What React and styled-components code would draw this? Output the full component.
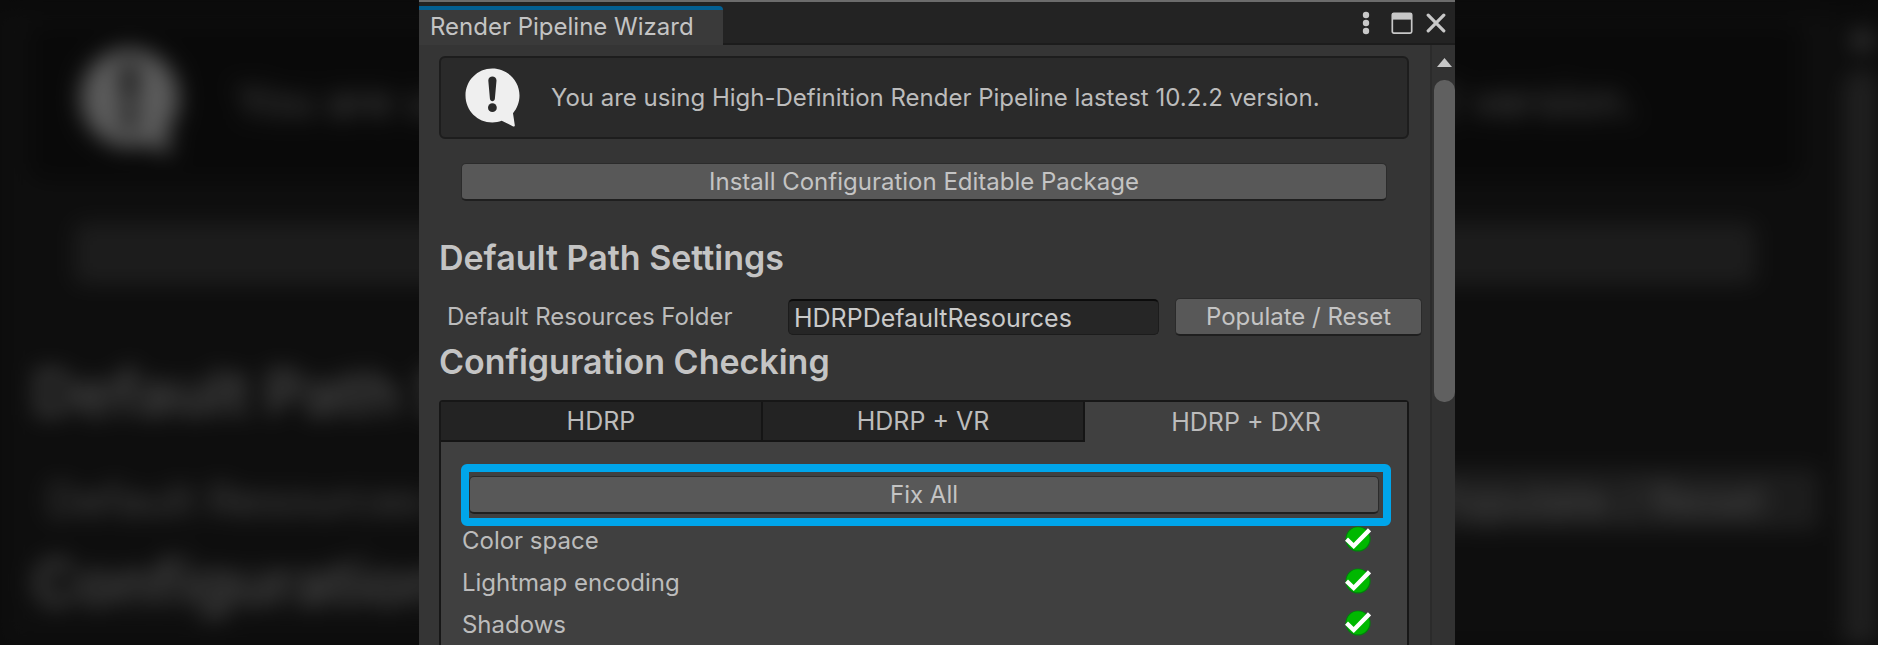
import React, { useId } from "react";
import styled, { createGlobalStyle } from "styled-components";

const GlobalStyle = createGlobalStyle`
  * { box-sizing: border-box; }
  body {
    margin: 0;
    background: #0b0b0b;
    font-family: Inter, "Liberation Sans", sans-serif;
    overflow: hidden;
  }
  button, input { font: inherit; color: inherit; margin: 0; }
`;

/* Share of the page width taken by the window. */
const WINDOW_SHARE = 0.5517;

const Page = styled.div`
  position: relative;
  display: flex;
  justify-content: center;
  height: 100vh;
  overflow: hidden;
`;

const Backdrop = styled.div`
  position: absolute;
  inset: 0;
  overflow: hidden;
  filter: blur(11px) brightness(0.39) contrast(1.063);
`;

/* Enlarged to a little more than the page width, so the blur has no bare edge. */
const Enlarged = styled.div`
  width: ${WINDOW_SHARE * 100}%;
  transform-origin: 0 0;
  transform: translate(-4px, -76px) scale(1.82);
`;

const Stage = styled.main`
  position: relative;
  width: ${WINDOW_SHARE * 100}%;
  margin-right: 4px;
`;

const Window = styled.section`
  display: flex;
  flex-direction: column;
  min-height: 100vh;
  background: #353535;
  color: #bcbcbc;
  font-size: 24px;
  line-height: 32px;
  border-top: 2px solid #6c6c6c;
`;

const TitleBar = styled.header`
  display: flex;
  align-items: flex-end;
  justify-content: space-between;
  height: 43px;
  background: #232323;
  box-shadow: inset 0 -2px #1c1c1c;
`;

const WindowTab = styled.h1`
  margin: 0;
  width: 304px;
  height: 39px;
  padding: 0 11px;
  border-top: 4px solid #035f92;
  border-top-right-radius: 4px;
  background: #3a3a3a;
  color: #c4c4c4;
  font-size: 24px;
  font-weight: 400;
  line-height: 34px;
  white-space: nowrap;
`;

const WindowActions = styled.div`
  display: flex;
  align-items: center;
  gap: 12px;
  height: 100%;
  padding: 0 9px 2px 0;
`;

const IconButton = styled.button`
  display: flex;
  padding: 0;
  border: 0;
  background: none;
  color: #c8c8c8;
`;

const Body = styled.div`
  display: flex;
  flex: 1;
`;

const Content = styled.div`
  display: flex;
  flex-direction: column;
  flex: 1;
  min-width: 0;
  padding: 11px 0 0 20px;
`;

const HelpBox = styled.div`
  display: flex;
  align-items: center;
  gap: 31px;
  height: 83px;
  margin-right: 21px;
  padding: 0 24px;
  border: 2px solid #1d1d1d;
  border-radius: 6px;
  background: #2a2a2a;
`;

const Action = styled.button`
  height: 38px;
  width: ${(p) => (p.$width ? `${p.$width}px` : "auto")};
  padding: 0;
  border: 1px solid #2b2b2b;
  border-bottom: 2px solid #1f1f1f;
  border-radius: 5px;
  background: #585858;
  color: #c4c4c4;
  line-height: 32px;
`;

const InstallRow = styled.div`
  display: grid;
  padding: 24px 43px 0 22px;
`;

const Heading = styled.h2`
  margin: ${(p) => p.$top}px 0 0;
  color: #c4c4c4;
  font-size: 34px;
  font-weight: 600;
  line-height: 40px;
`;

const PathRow = styled.div`
  display: flex;
  align-items: center;
  height: 40px;
  margin-top: 19px;
  padding: 0 8px;
`;

const PathLabel = styled.label`
  flex: 0 0 341px;
`;

const PathInput = styled.input`
  flex: 1;
  min-width: 0;
  height: 36px;
  margin-right: 16px;
  padding: 0 5px;
  border: 1px solid #1c1c1c;
  border-top: 2px solid #0c0c0c;
  border-radius: 5px;
  background: #262626;
  color: #cacaca;
  font-size: 25px;
`;

const TabPanel = styled.div`
  flex: 1;
  margin: 18px 21px 0 0;
  border: 2px solid #171717;
  border-bottom: 0;
  border-radius: 4px 4px 0 0;
  background: #404040;
`;

const TabList = styled.div`
  display: grid;
  grid-template-columns: repeat(3, 1fr);
`;

const Tab = styled.button`
  height: 40px;
  padding: 0;
  border: 0 solid #151515;
  border-width: ${(p) => (p.$active ? "0" : "0 2px 2px 0")};
  background: ${(p) => (p.$active ? "#404040" : "#232323")};
  font-size: 25px;
  line-height: 36px;
`;

const PanelBody = styled.div`
  padding: 22px 16px 0 20px;
`;

const Highlight = styled.div`
  display: grid;
  padding: 4px 4px 4px 0;
  border: 8px solid #00a5ea;
  border-radius: 6px;
`;

const CheckList = styled.ul`
  margin: 0;
  padding: 0 20px 0 1px;
  list-style: none;
`;

const CheckRow = styled.li`
  display: flex;
  justify-content: space-between;
  height: 42px;
  line-height: 30px;
`;

const ScrollBar = styled.div`
  display: flex;
  flex-direction: column;
  align-items: flex-end;
  width: 25px;
  border-left: 2px solid #2b2b2b;
  background: #323232;
`;

const ScrollUp = styled(IconButton)`
  align-items: center;
  justify-content: center;
  width: 21px;
  height: 35px;
`;

const ScrollThumb = styled.div`
  width: 21px;
  height: 322px;
  border-radius: 10px;
  background: #606060;
`;

const MenuIcon = () => (
  <svg width="24" height="24" viewBox="0 0 24 24" fill="currentColor" aria-hidden="true">
    <circle cx="12" cy="4" r="3.2" />
    <circle cx="12" cy="12" r="3.2" />
    <circle cx="12" cy="20" r="3.2" />
  </svg>
);

const MaximizeIcon = () => (
  <svg width="24" height="24" viewBox="0 0 24 24" aria-hidden="true">
    <rect x="2.3" y="2.3" width="19.4" height="19.8" rx="1.5" fill="none" stroke="currentColor" strokeWidth="1.7" />
    <path d="M2 2h20v6.6H2z" fill="currentColor" />
  </svg>
);

const CloseIcon = () => (
  <svg width="20" height="24" viewBox="0 0 20 24" aria-hidden="true">
    <path d="M2.2 4.2 17.8 19.8M17.8 4.2 2.2 19.8" stroke="currentColor" strokeWidth="3.2" strokeLinecap="round" />
  </svg>
);

const NoticeIcon = () => (
  <svg width="55" height="60" viewBox="0 0 55 60" aria-hidden="true">
    <path
      d="M27.3.5C12.5.5.5 12.5.5 27.500s12 27 26.800 27c3.300 0 6.500-.6 9.400-1.700l11.500 5.600c1 .5 1.800 0 1.600-1.100L48 45.200c4.100-4.700 6.500-11 6.500-17.700C54.500 12.500 42.200.5 27.300.5Z"
      fill="#efefef"
    />
    <path d="M23.300 12.500c0-5.400 8.200-5.400 8.200 0l-1.600 18c-.3 3.600-4.700 3.600-5 0Z" fill="#2a2a2a" />
    <circle cx="27.400" cy="39.700" r="4.400" fill="#2a2a2a" />
  </svg>
);

const ArrowIcon = () => (
  <svg width="15" height="9" viewBox="0 0 15 9" fill="currentColor" aria-hidden="true">
    <path d="M7.500 0 15 9H0Z" />
  </svg>
);

const PassedIcon = () => (
  <svg width="26" height="26" viewBox="0 0 26 26" role="img" aria-label="Passed">
    <circle cx="13" cy="13" r="12.600" fill="#00800c" />
    <circle cx="13" cy="12.800" r="11.500" fill="#00b800" />
    <path d="M1.500 13.200 8.700 20 24.500 3.800" fill="none" stroke="#fff" strokeWidth="4.400" />
  </svg>
);

const CHECKS = ["Color space", "Lightmap encoding", "Shadows"];
const TABS = ["HDRP", "HDRP + VR", "HDRP + DXR"];

function WindowHeader() {
  return (
    <>
      <WindowTab>Render Pipeline Wizard</WindowTab>
      <WindowActions>
        <IconButton aria-label="Menu"><MenuIcon /></IconButton>
        <IconButton aria-label="Maximize"><MaximizeIcon /></IconButton>
        <IconButton aria-label="Close"><CloseIcon /></IconButton>
      </WindowActions>
    </>
  );
}

function ConfigurationTabs() {
  return (
    <TabPanel>
      <TabList role="tablist">
        {TABS.map((name, i) => (
          <Tab key={name} role="tab" aria-selected={i === 2} $active={i === 2}>{name}</Tab>
        ))}
      </TabList>
      <PanelBody>
        <Highlight>
          <Action>Fix All</Action>
        </Highlight>
        <CheckList>
          {CHECKS.map((name) => (
            <CheckRow key={name}>
              <span>{name}</span>
              <PassedIcon />
            </CheckRow>
          ))}
        </CheckList>
      </PanelBody>
    </TabPanel>
  );
}

/* The backdrop shows only the middle of the window, so it skips the header and the tabs. */
function WizardWindow({ backdrop = false }) {
  const folderId = useId();
  return (
    <Window>
      <TitleBar>{!backdrop && <WindowHeader />}</TitleBar>
      <Body>
        <Content>
          <HelpBox>
            <NoticeIcon />
            <span>You are using High-Definition Render Pipeline lastest 10.2.2 version.</span>
          </HelpBox>
          <InstallRow>
            <Action>Install Configuration Editable Package</Action>
          </InstallRow>
          <Heading $top={37}>Default Path Settings</Heading>
          <PathRow>
            <PathLabel htmlFor={folderId}>Default Resources Folder</PathLabel>
            <PathInput id={folderId} type="text" defaultValue="HDRPDefaultResources" />
            <Action $width={247}>Populate / Reset</Action>
          </PathRow>
          <Heading $top={5}>Configuration Checking</Heading>
          {!backdrop && <ConfigurationTabs />}
        </Content>
        <ScrollBar>
          <ScrollUp aria-label="Scroll up"><ArrowIcon /></ScrollUp>
          <ScrollThumb />
        </ScrollBar>
      </Body>
    </Window>
  );
}

export default function App() {
  return (
    <Page>
      <GlobalStyle />
      <Backdrop aria-hidden="true" inert>
        <Enlarged>
          <WizardWindow backdrop />
        </Enlarged>
      </Backdrop>
      <Stage>
        <WizardWindow />
      </Stage>
    </Page>
  );
}
